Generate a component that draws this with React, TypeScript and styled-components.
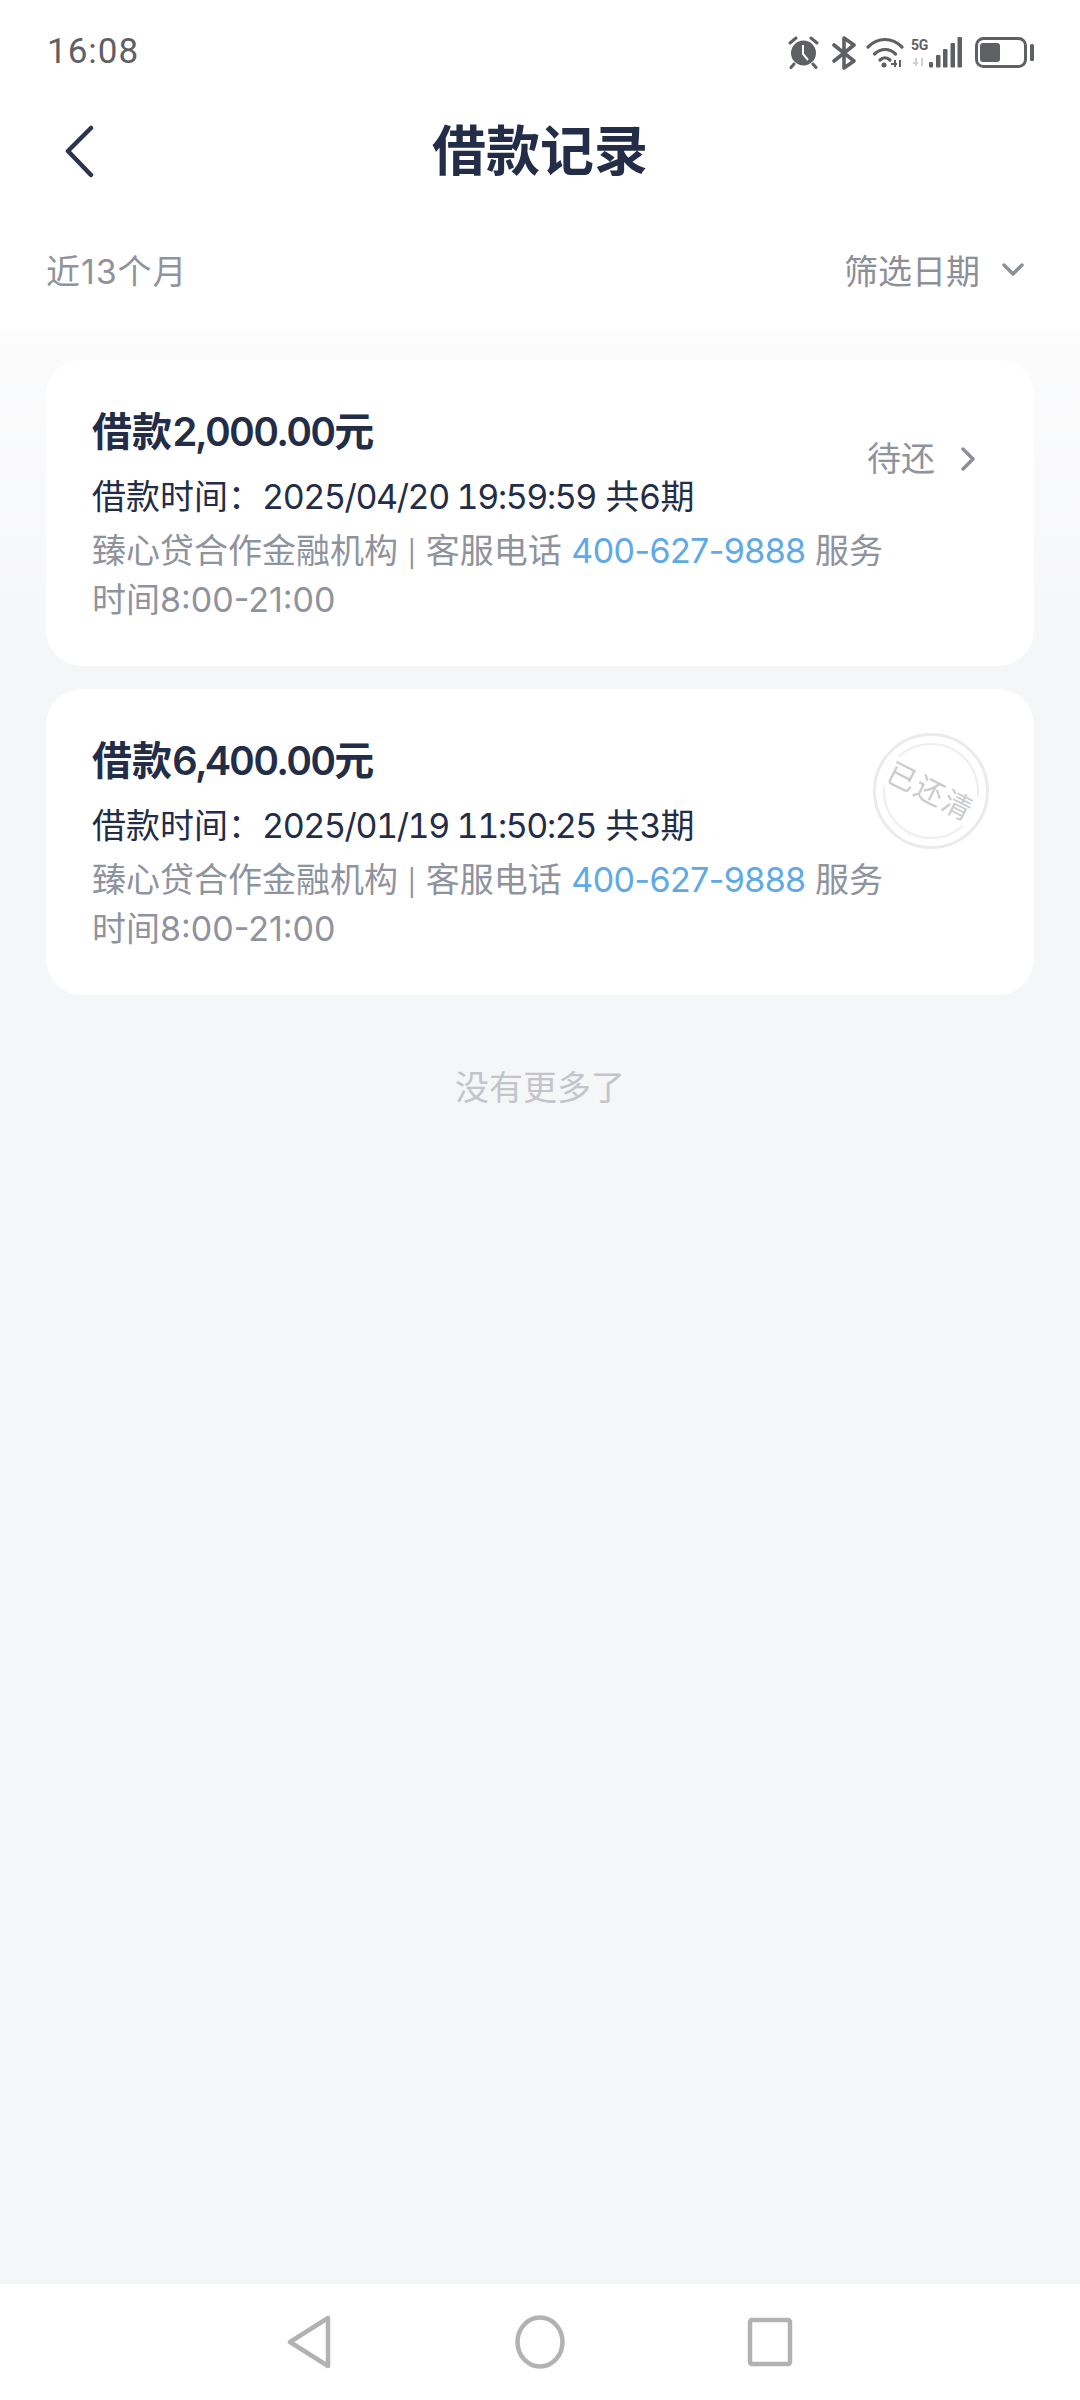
import React from 'react';
import styled, {createGlobalStyle} from 'styled-components';

const GlobalStyle = createGlobalStyle`
  html, body {
    margin: 0;
    padding: 0;
    background: #f5f6f8;
  }
  * {
    box-sizing: border-box;
  }
`;

const FONT = `Inter, "Noto Sans CJK SC", sans-serif`;

const Screen = styled.div`
  width: 1080px;
  height: 2400px;
  display: flex;
  flex-direction: column;
  background: #f5f6f8;
  font-family: ${FONT};
  overflow: hidden;
`;

const Top = styled.header`
  height: 330px;
  flex: none;
  background: #fff;
  display: flex;
  flex-direction: column;
`;

const StatusBar = styled.div`
  height: 104px;
  padding: 30px 46px 0 47px;
  display: flex;
  justify-content: space-between;
  align-items: flex-start;
`;

const Clock = styled.span`
  font-family: Roboto, sans-serif;
  font-size: 35px;
  line-height: 44px;
  letter-spacing: 1px;
  color: #5f6064;
`;

const StatusIcons = styled.svg`
  margin-top: 6px;
`;

const TitleRow = styled.div`
  height: 96px;
  position: relative;
  display: flex;
  align-items: center;
  justify-content: center;
`;

const BackIcon = styled.svg`
  position: absolute;
  left: 62px;
  top: 21px;
`;

const Title = styled.h1`
  margin: 0;
  font-size: 54px;
  line-height: 64px;
  font-weight: 700;
  color: #232d47;
`;

const FilterRow = styled.div`
  flex: 1;
  padding: 9px 56px 0 46px;
  display: flex;
  justify-content: space-between;
  align-items: center;
  color: #8f939d;
  font-size: 34px;
`;

const Period = styled.span`
  letter-spacing: 0.9px;
`;

const Filter = styled.div`
  display: flex;
  align-items: center;
  gap: 22px;
  color: #8b8f99;
`;

const List = styled.main`
  flex: 1;
  padding: 30px 46px 0;
  display: flex;
  flex-direction: column;
  gap: 23px;
  background: linear-gradient(#fcfcfd 0, #f5f6f8 340px);
`;

const Card = styled.section`
  height: 306px;
  border-radius: 36px;
  background: #fff;
  padding: 44px 46px 0;
  position: relative;
`;

const Amount = styled.div`
  font-size: 40px;
  line-height: 56px;
  font-weight: 700;
  color: #232d47;
`;

const AmountValue = styled.span`
  font-weight: 600;
  font-variant-numeric: tabular-nums;
  letter-spacing: -1.8px;
`;

const Time = styled.div`
  margin-top: 14px;
  font-size: 34px;
  line-height: 46px;
  color: #232d47;
`;

const TimeValue = styled.span`
  font-variant-numeric: tabular-nums;
  letter-spacing: -1.4px;
`;

const Note = styled.div`
  width: 810px;
  margin-top: 8px;
  font-size: 34px;
  line-height: 46px;
  color: #8f939e;
`;

const Pipe = styled.span`
  font-size: 26px;
`;

const Phone = styled.span`
  color: #5ea9e6;
  letter-spacing: -0.6px;
`;

const Status = styled.div`
  position: absolute;
  right: 58px;
  top: 76px;
  display: flex;
  align-items: center;
  gap: 25px;
  font-size: 34px;
  line-height: 46px;
  color: #8f939e;
`;

const Stamp = styled.div`
  position: absolute;
  right: 45px;
  top: 44px;
  width: 116px;
  height: 116px;
  border-radius: 50%;
  border: 3px solid #ebebed;
  display: flex;
  align-items: center;
  justify-content: center;

  &::before {
    content: '';
    position: absolute;
    inset: 7px;
    border-radius: 50%;
    border: 2px solid #eeeef0;
  }
`;

const StampText = styled.span`
  font-size: 29px;
  line-height: 1;
  letter-spacing: 2px;
  color: #cbccd0;
  transform: rotate(27deg);
  background: #fff;
  padding: 2px 2px;
  position: relative;
  white-space: nowrap;
`;

const End = styled.div`
  margin-top: 47px;
  text-align: center;
  font-size: 34px;
  line-height: 46px;
  color: #c3c5cb;
`;

const NavBar = styled.nav`
  height: 116px;
  flex: none;
  background: #fff;
  display: flex;
  align-items: center;
  justify-content: center;
  gap: 182px;
`;

const StatusGlyphs = () => (
  <StatusIcons width="246" height="34" viewBox="0 0 246 34">
    {/* alarm */}
    <circle cx="15.5" cy="17" r="12.5" fill="#5f6064" />
    <path d="M15 9v9l5 6" fill="none" stroke="#fff" strokeWidth="2" />
    <path d="M2 7l6-5M29 7l-6-5M6 28l-3 3.5M25 28l3 3.5" stroke="#5f6064" strokeWidth="3" strokeLinecap="round" />
    {/* bluetooth */}
    <path d="M46 9l20 16-10 7V2l10 7-20 16" fill="none" stroke="#5f6064" strokeWidth="3.6" strokeLinejoin="round" strokeLinecap="round" />
    {/* wifi */}
    <path d="M80 11c10-10 24-10 34 0M86.5 18c6.500-6 15-6 21 0M92 24c3-3 7-3 10 0" fill="none" stroke="#5f6064" strokeWidth="3.2" strokeLinecap="round" />
    <circle cx="96" cy="29" r="2.5" fill="#5f6064" />
    <path d="M103 28h6M107 24v7M112 24v7" stroke="#5f6064" strokeWidth="2" />
    {/* 5G */}
    <text x="123" y="14" fontSize="14" fontWeight="700" fontFamily="Roboto, sans-serif" fill="#5f6064" letterSpacing="-0.4">5G</text>
    <path d="M125 27h5M128 22v8M134 22v8" stroke="#cfcfd1" strokeWidth="2" />
    {/* signal */}
    <rect x="141" y="26" width="4" height="5.500" rx="1" fill="#5f6064" />
    <rect x="148" y="19" width="4.500" height="12.500" rx="1" fill="#5f6064" />
    <rect x="155" y="13" width="4.500" height="18.500" rx="1" fill="#5f6064" />
    <rect x="162.500" y="7" width="4.500" height="24.500" rx="1" fill="#5f6064" />
    <rect x="169.500" y="1" width="4.500" height="30.500" rx="1" fill="#5f6064" />
    {/* battery */}
    <rect x="188.500" y="2.500" width="49" height="28" rx="7" fill="none" stroke="#5f6064" strokeWidth="3" />
    <rect x="192" y="7" width="20" height="19" rx="3" fill="#5f6064" />
    <rect x="242" y="8" width="4" height="17" rx="1.500" fill="#5f6064" />
  </StatusIcons>
);

const Chevron = ({d, w, h}: {d: string; w: number; h: number}) => (
  <svg width={w} height={h} viewBox={`0 0 ${w} ${h}`}>
    <path d={d} fill="none" stroke="#8b8f99" strokeWidth="3.4" strokeLinecap="round" strokeLinejoin="round" />
  </svg>
);

const records = [
  {amount: '2,000.00', time: '2025/04/20 19:59:59', terms: 6, pending: true},
  {amount: '6,400.00', time: '2025/01/19 11:50:25', terms: 3, pending: false},
];

export default function App() {
  return (
    <Screen>
      <GlobalStyle />
      <Top>
        <StatusBar>
          <Clock>16:08</Clock>
          <StatusGlyphs />
        </StatusBar>
        <TitleRow>
          <BackIcon width="34" height="54" viewBox="0 0 34 54">
            <path d="M29 3L6 26l23 24" fill="none" stroke="#2b3550" strokeWidth="4.500" strokeLinecap="round" strokeLinejoin="round" />
          </BackIcon>
          <Title>借款记录</Title>
        </TitleRow>
        <FilterRow>
          <Period>近13个月</Period>
          <Filter>
            <span>筛选日期</span>
            <Chevron d="M2 2l9 9 9-9" w={22} h={14} />
          </Filter>
        </FilterRow>
      </Top>
      <List>
        {records.map((r) => (
          <Card key={r.amount}>
            <Amount>
              借款<AmountValue>{r.amount}</AmountValue>元
            </Amount>
            <Time>
              借款时间：<TimeValue>{r.time}</TimeValue> 共{r.terms}期
            </Time>
            <Note>
              臻心贷合作金融机构 <Pipe>|</Pipe> 客服电话 <Phone>400-627-9888</Phone> 服务时间8:00-21:00
            </Note>
            {r.pending ? (
              <Status>
                待还
                <Chevron d="M3 2l10 10L3 22" w={16} h={24} />
              </Status>
            ) : (
              <Stamp>
                <StampText>已还清</StampText>
              </Stamp>
            )}
          </Card>
        ))}
        <End>没有更多了</End>
      </List>
      <NavBar>
        <svg width="46" height="54" viewBox="0 0 46 54">
          <path d="M41 3v48L3 27z" fill="none" stroke="#b2b2b2" strokeWidth="4.500" strokeLinejoin="round" />
        </svg>
        <svg width="50" height="54" viewBox="0 0 50 54">
          <ellipse cx="25" cy="27" rx="22.500" ry="24.500" fill="none" stroke="#b2b2b2" strokeWidth="4.500" />
        </svg>
        <svg width="46" height="50" viewBox="0 0 46 50">
          <rect x="3" y="3" width="40" height="44" rx="2" fill="none" stroke="#b2b2b2" strokeWidth="4.500" />
        </svg>
      </NavBar>
    </Screen>
  );
}
